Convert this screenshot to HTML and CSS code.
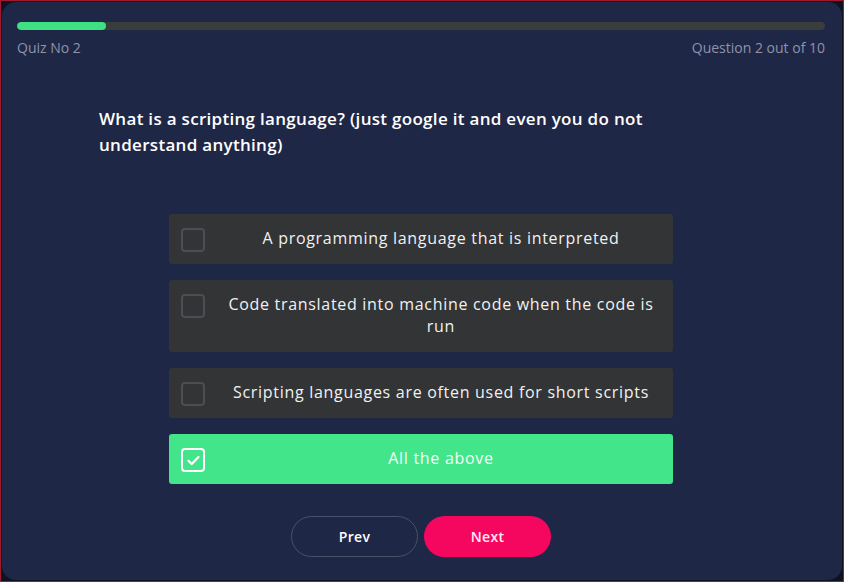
FILE: index.html
```html
<!DOCTYPE html>
<html lang="en">
<head>
<meta charset="utf-8">
<title>Quiz</title>
<link rel="stylesheet" href="styles.css">
</head>
<body>
<div class="frame">
  <main class="card">
    <div class="progress"><div class="progress-fill" style="width: 11%"></div></div>
    <div class="meta">
      <span>Quiz No 2</span>
      <span>Question 2 out of 10</span>
    </div>
    <h1 class="question">What is a scripting language? (just google it and even you do not understand anything)</h1>
    <ul class="options">
      <li class="option"><span class="check"></span><span class="option-text">A programming language that is interpreted</span></li>
      <li class="option"><span class="check"></span><span class="option-text">Code translated into machine code when the code is run</span></li>
      <li class="option"><span class="check"></span><span class="option-text">Scripting languages are often used for short scripts</span></li>
      <li class="option selected"><span class="check"><svg viewBox="0 0 24 24" width="17" height="17"><path d="M5 12.5l4.5 4.5L19 7" fill="none" stroke="#fff" stroke-width="3.2" stroke-linecap="round" stroke-linejoin="round"/></svg></span><span class="option-text">All the above</span></li>
    </ul>
    <div class="actions">
      <button class="btn btn-prev">Prev</button>
      <button class="btn btn-next">Next</button>
    </div>
  </main>
</div>
</body>
</html>
```

FILE: styles.css
```css
* { box-sizing: border-box; }
html, body { margin: 0; padding: 0; }
body {
  background: #10131f;
  font-family: "Open Sans", "Noto Sans", sans-serif;
}
.frame {
  width: 844px;
  height: 582px;
  border: 1px solid #a3182f;
  padding: 1px;
  background: #0f1220;
}
.card {
  height: 100%;
  background: #1f2746;
  border-radius: 14px;
  padding: 20px 17px 0 15px;
}
.progress {
  height: 8px;
  border-radius: 4px;
  background: #393d3b;
  overflow: hidden;
}
.progress-fill {
  height: 100%;
  background: #3fe083;
  border-radius: 4px;
}
.meta {
  margin-top: 8px;
  display: flex;
  justify-content: space-between;
  font-size: 14px;
  line-height: 20px;
  color: #8d93aa;
  font-weight: 500;
}
.question {
  width: 644px;
  margin: 48px auto 0;
  font-size: 17px;
  line-height: 26px;
  font-weight: 600;
  letter-spacing: 0.3px;
  color: #ffffff;
}
.options {
  list-style: none;
  padding: 0;
  margin: 56px auto 0;
  width: 504px;
  display: flex;
  flex-direction: column;
  gap: 16px;
}
.option {
  display: flex;
  align-items: flex-start;
  background: #323436;
  border-radius: 3px;
  padding: 13px 4px 15px 12px;
  color: #f1f1f3;
  font-size: 16px;
  line-height: 22px;
  letter-spacing: 0.7px;
}
.check {
  flex: none;
  width: 24px;
  height: 24px;
  margin-top: 1px;
  margin-bottom: -3px;
  border: 2px solid #4b4e52;
  border-radius: 4px;
  display: flex;
  align-items: center;
  justify-content: center;
}
.option-text {
  flex: 1;
  text-align: center;
  padding: 0 0 0 8px;
}
.selected {
  background: #43e58a;
  color: #f4fff8;
}
.selected .check {
  border-color: #ffffff;
}
.actions {
  margin-top: 32px;
  display: flex;
  justify-content: center;
  gap: 6px;
}
.btn {
  width: 127px;
  height: 41px;
  border-radius: 21px;
  font-family: inherit;
  font-size: 14px;
  font-weight: 600;
  letter-spacing: 0.3px;
  color: #ffffff;
  cursor: pointer;
}
.btn-prev {
  background: transparent;
  border: 1px solid #4a5169;
}
.btn-next {
  background: #f5065f;
  border: none;
  color: #ffeaf3;
}
```
